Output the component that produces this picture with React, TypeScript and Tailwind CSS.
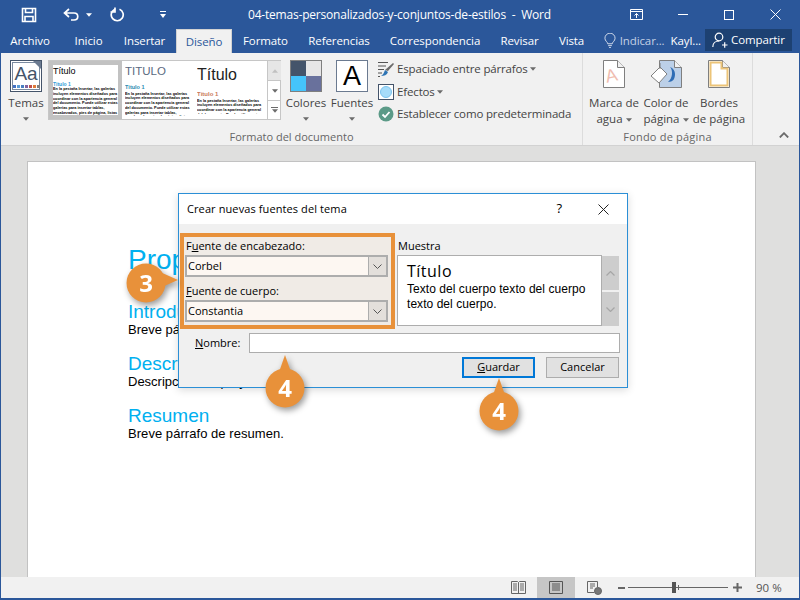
import type { ReactNode } from 'react';

const UI_FONT = "font-['Open_Sans','Noto_Sans',sans-serif]";

const TABS: { label: string; width: string }[] = [
  { label: 'Archivo', width: 'w-[63px] pr-[5px]' },
  { label: 'Inicio', width: 'w-[49px]' },
  { label: 'Insertar', width: 'w-[63px]' },
  { label: 'Diseño', width: 'w-[56px]' },
  { label: 'Formato', width: 'w-[67px]' },
  { label: 'Referencias', width: 'w-[80px]' },
  { label: 'Correspondencia', width: 'w-[112px]' },
  { label: 'Revisar', width: 'w-[57px]' },
  { label: 'Vista', width: 'w-[47px]' },
];

const BODY_TEXT =
  'En la pestaña Insertar, las galerías incluyen elementos diseñados para coordinar con la apariencia general del documento. Puede utilizar estas galerías para insertar tablas, encabezados, pies de página, listas';

function Caret({ className = '' }: { className?: string }) {
  return (
    <svg width="6" height="4" viewBox="0 0 7 4" className={className}>
      <path d="M0 0h7L3.500 4z" fill="#6b6b6b" />
    </svg>
  );
}

function TitleBar() {
  return (
    <div className="flex h-[29px] shrink-0 items-center bg-[#2b579a] text-white">
      <svg width="16" height="16" viewBox="0 0 16 16" className="ml-[20px]" fill="none" stroke="white" strokeWidth="1.600">
        <path d="M1.500 1.500h13v13h-13z" />
        <path d="M4.500 1.500v4h7v-4M4 14.500v-5h8v5" />
      </svg>
      <svg width="17" height="14" viewBox="0 0 17 14" className="ml-[26px]" fill="none" stroke="white" strokeWidth="1.700">
        <path d="M6 1L1.500 5 6 9M2 5h9c5 0 5 7 0 7H8" />
      </svg>
      <Caret className="ml-[6px] [&>path]:fill-white" />
      <svg width="15" height="15" viewBox="0 0 15 15" className="ml-[18px]" fill="none" stroke="white" strokeWidth="1.700">
        <path d="M9.500 2.200a6 6 0 1 1-5 .2M5 .5v4.500H.5" />
      </svg>
      <svg width="6" height="7" viewBox="0 0 6 7" className="ml-[35px]">
        <path d="M0 0h6v1H0zM0 3h6L3 7z" fill="white" />
      </svg>
      <div className="ml-[82px] w-[304px] whitespace-nowrap text-[12px] tracking-[-0.200px]">
        04-temas-personalizados-y-conjuntos-de-estilos&nbsp; -&nbsp; Word
      </div>
      <svg width="13" height="11" viewBox="0 0 13 11" className="ml-[78px]" fill="none" stroke="white">
        <path d="M.500.500h12v10H.500zM.500 2.500h12M6.500 9V4.500M4.500 6.500l2-2 2 2" />
      </svg>
      <div className="ml-[35px] h-px w-[10px] bg-white" />
      <div className="ml-[36px] size-[10px] border border-white" />
      <svg width="11" height="11" viewBox="0 0 11 11" className="ml-[36px]" stroke="white">
        <path d="M.500.500l10 10M10.500.500l-10 10" />
      </svg>
    </div>
  );
}

function TabRow() {
  return (
    <div className="flex h-[24px] shrink-0 items-stretch bg-[#2b579a] text-[11.500px] tracking-[-0.100px] text-white">
      <div className="flex">
        {TABS.map((t) =>
          t.label === 'Diseño' ? (
            <div
              key={t.label}
              className={`flex h-[25px] items-center justify-center border-x border-t border-[#d2d2d2] bg-[#f1f1f1] text-[#2b579a] ${t.width}`}
            >
              {t.label}
            </div>
          ) : (
            <div key={t.label} className={`flex items-center justify-center ${t.width}`}>
              {t.label}
            </div>
          ),
        )}
      </div>
      <div className="ml-auto mr-[7px] flex items-center">
        <svg width="12" height="16" viewBox="0 0 13 16" fill="none" stroke="#dbe3f0" strokeWidth="1">
          <path d="M4 11c0-2-3-3-3-6a5.500 5.500 0 0 1 11 0c0 3-3 4-3 6zM4.500 13h4M5.500 15h2" />
        </svg>
        <span className="ml-[4px] text-[#c3d0e4]">Indicar...</span>
        <span className="ml-[6px]">Kayl...</span>
        <div className="ml-[4px] flex h-[22px] w-[87px] items-center self-start bg-[#1d4172] pl-[7px]">
          <svg width="16" height="16" viewBox="0 0 16 16" fill="none" stroke="white" strokeWidth="1.200">
            <circle cx="7" cy="5" r="3.800" />
            <path d="M.800 15c0-4 3-6 6.200-6M10 13h5.500M12.700 10.200v5.600" />
          </svg>
          <span className="ml-[3px]">Compartir</span>
        </div>
      </div>
    </div>
  );
}

function ThemesIcon() {
  return (
    <div className="relative size-[32px] border border-[#44546a] bg-white p-px">
      <div className="flex size-full flex-col items-center border border-[#7b8ba0]">
        <span className="mt-[1px] font-['Liberation_Sans',sans-serif] text-[19px] leading-[20px] text-[#44546a]">
          Aa
        </span>
        <div className="mt-[1px] flex gap-px">
          {['#4472c4', '#5b9bd5', '#4a7fc1', '#8064a2', '#c0504d', '#e07b39', '#7f7f7f'].map((c) => (
            <span key={c} className="size-[3px]" style={{ background: c }} />
          ))}
        </div>
      </div>
      <svg width="8" height="8" viewBox="0 0 8 8" className="absolute right-0 top-0">
        <path d="M0 0h8v8z" fill="#6b7a90" />
      </svg>
    </div>
  );
}

function GalleryItem({
  box,
  title,
  titleClass,
  headingClass,
  bodyClass,
}: {
  box: string;
  title: string;
  titleClass: string;
  headingClass: string;
  bodyClass: string;
}) {
  return (
    <div className={`h-full shrink-0 overflow-hidden ${box}`}>
      <div className="h-full overflow-hidden bg-white font-['Liberation_Sans',sans-serif]">
        <div className={`whitespace-nowrap ${titleClass}`}>{title}</div>
        <div className={`font-bold ${headingClass}`}>Título 1</div>
        <div className={`overflow-hidden text-[3.800px] font-bold leading-[4.800px] text-black ${bodyClass}`}>{BODY_TEXT}</div>
      </div>
    </div>
  );
}

function Gallery() {
  return (
    <div className="ml-[3px] mt-[7px] flex h-[60px] w-[233px] border border-[#c6c6c6] bg-white">
      <GalleryItem
        box="w-[73px] border-[4px] border-[#c2c2c2]"
        title="Título"
        titleClass="mt-px text-[9px] leading-[10px] text-black"
        headingClass="mt-[5px] text-[5px] leading-[6px] text-[#2e9bd6]"
        bodyClass="h-[29px]"
      />
      <GalleryItem
        box="w-[74px] pl-[3px] pr-[3px] pt-[4px]"
        title="TITULO"
        titleClass="text-[11.500px] leading-[12px] text-[#5a6a80]"
        headingClass="mt-[7px] text-[5.500px] leading-[6px] text-[#2a8cb0]"
        bodyClass="mt-[1.500px] h-[24px]"
      />
      <GalleryItem
        box="w-[71px] pl-[1px] pr-[2px] pt-[4px]"
        title="Título"
        titleClass="text-[16px] leading-[20px] text-[#222]"
        headingClass="mt-[5px] text-[6px] leading-[8px] text-[#c9795a]"
        bodyClass="mt-[0.500px] h-[15px]"
      />
      <div className="flex w-[14px] shrink-0 flex-col border-l border-[#c6c6c6]">
        <div className="flex h-[20px] items-center justify-center border-b border-[#c6c6c6] bg-[#e6e6e6]">
          <Caret className="rotate-180 opacity-30" />
        </div>
        <div className="flex h-[20px] items-center justify-center border-b border-[#c6c6c6]">
          <Caret />
        </div>
        <div className="flex flex-1 flex-col items-center justify-center gap-px">
          <div className="h-px w-[7px] bg-[#6b6b6b]" />
          <Caret />
        </div>
      </div>
    </div>
  );
}

function BigButton({ width, icon, label, caret }: { width: string; icon: ReactNode; label: ReactNode; caret?: boolean }) {
  return (
    <div className={`flex shrink-0 flex-col items-center text-[11.500px] leading-[16px] text-[#444] ${width}`}>
      <div className="h-[32px]">{icon}</div>
      <div className="mt-[3px] whitespace-nowrap text-center">{label}</div>
      {caret && <Caret className="mt-[6px]" />}
    </div>
  );
}

function PageIcon({ children }: { children?: ReactNode }) {
  return (
    <svg width="22" height="28" viewBox="0 0 22 28">
      <path d="M.500.500h14l7 7v20H.500z" fill="white" stroke="#7f7f7f" />
      <path d="M14.500.500v7h7" fill="#f1f1f1" stroke="#7f7f7f" />
      {children}
    </svg>
  );
}

function Ribbon() {
  return (
    <div className="flex h-[93px] shrink-0 border-b border-[#d2d2d2] bg-[#f1f1f1]">
      <div className="flex w-[582px] shrink-0 flex-col border-r border-[#dcdcdc]">
        <div className="flex h-[78px]">
          <BigButton width="ml-[6px] w-[38px] pt-[7px]" icon={<ThemesIcon />} label="Temas" caret />
          <Gallery />
          <BigButton
            width="ml-[2px] w-[46px] pt-[7px]"
            caret
            label="Colores"
            icon={
              <div className="grid size-[32px] grid-cols-2 grid-rows-2 border border-[#7f7f7f]">
                <span className="bg-[#44546a]" />
                <span className="bg-[#e7e6e6]" />
                <span className="bg-[#45c4fb]" />
                <span className="bg-[#69719c]" />
              </div>
            }
          />
          <BigButton
            width="w-[46px] pt-[7px]"
            caret
            label="Fuentes"
            icon={
              <div className="flex size-[32px] items-center justify-center border border-[#6b7a90] bg-white font-['Liberation_Sans',sans-serif] text-[27px] text-black">
                A
              </div>
            }
          />
          <div className="ml-[3px] flex flex-col gap-[2.500px] pt-[6px] text-[11.500px] tracking-[-0.150px] text-[#444]">
            <div className="flex h-[20px] items-center gap-[3px] whitespace-nowrap">
              <svg width="16" height="16" viewBox="0 0 16 16" fill="none">
                <path d="M0 1.500h10M0 5h8M0 8.500h6M0 12h4M0 15.500h2" stroke="#555" />
                <path d="M15 2l1 1-6 7-3-1z" fill="#6b6b6b" />
                <path d="M7 9l3 2c-1 3-4 4-7 4 2-1 3-3 4-6z" fill="#2f75b5" />
              </svg>
              Espaciado entre párrafos
              <Caret className="-ml-px" />
            </div>
            <div className="flex h-[20px] items-center gap-[3px] whitespace-nowrap">
              <div className="flex size-[16px] items-center justify-center border border-[#44546a] bg-white">
                <div className="size-[12px] rounded-full border border-[#7cc3ee] bg-[#a6dcfa]" />
              </div>
              Efectos
              <Caret className="-ml-px" />
            </div>
            <div className="flex h-[20px] items-center gap-[3px] whitespace-nowrap">
              <svg width="16" height="16" viewBox="0 0 16 16">
                <circle cx="8" cy="8" r="7.500" fill="#5b9a87" />
                <path d="M4.500 8.500l2.500 2.500 4.500-5" fill="none" stroke="white" strokeWidth="1.800" />
              </svg>
              Establecer como predeterminada
            </div>
          </div>
        </div>
        <div className="text-center text-[11px] text-[#666]">Formato del documento</div>
      </div>
      <div className="flex w-[170px] shrink-0 flex-col border-r border-[#dcdcdc]">
        <div className="flex h-[78px] pl-[5px] pt-[7px]">
          <BigButton
            width="w-[52px]"
            label={
              <>
                Marca de
                <br />
                agua <Caret className="inline align-middle" />
              </>
            }
            icon={
              <PageIcon>
                <text x="2" y="21" fontSize="18" fill="#f0bdb0" fontFamily="Liberation Sans" transform="rotate(-12 11 14)">
                  A
                </text>
              </PageIcon>
            }
          />
          <BigButton
            width="w-[52px]"
            label={
              <>
                Color de
                <br />
                página <Caret className="inline align-middle" />
              </>
            }
            icon={
              <svg width="32" height="28" viewBox="0 0 32 28">
                <path d="M9.500.500h15l7 7v20h-22z" fill="#bcd0e8" stroke="#7f7f7f" />
                <path d="M24.500.500v7h7" fill="#f1f1f1" stroke="#7f7f7f" />
                <path d="M20 7c3 3 3 11-2 15 5 0 7-3 7-8 0-3-2-6-5-7z" fill="#2f6db5" />
                <path d="M1 16l9-9 7 7-8 9z" fill="white" stroke="#7f7f7f" />
                <path d="M10 9V3" stroke="#7f7f7f" fill="none" />
              </svg>
            }
          />
          <BigButton
            width="w-[54px]"
            label={
              <>
                Bordes
                <br />
                de página
              </>
            }
            icon={
              <PageIcon>
                <path d="M2.500 2.500h11v6h6v17h-17z" fill="none" stroke="#ecc478" strokeWidth="2" />
              </PageIcon>
            }
          />
        </div>
        <div className="text-center text-[11px] tracking-[0.200px] text-[#666]">Fondo de página</div>
      </div>
      <div className="flex flex-1 items-end justify-end pb-[7px] pr-[10px]">
        <svg width="10" height="6" viewBox="0 0 10 6" fill="none" stroke="#6b6b6b" strokeWidth="1.800">
          <path d="M.800 5.500L5 1.200l4.200 4.300" />
        </svg>
      </div>
    </div>
  );
}

function DocumentArea() {
  const heading = 'text-[19px] leading-[21px] text-[#00b0f0]';
  const para = 'text-[13px] leading-[15px] text-black';
  return (
    <div className="min-h-0 flex-1 bg-[#dfdfde] pl-[26px] pt-[15px]">
      <div className="h-full w-[729px] border-l border-r border-t border-[#c2c2c2] bg-white pl-[100px] pt-[81px] font-['Liberation_Sans',sans-serif]">
        <div className="text-[28px] leading-[34px] text-[#00b0f0]">Propuesta</div>
        <div className={`mt-[24px] ${heading}`}>Introducción</div>
        <div className={para}>Breve párrafo de introducción.</div>
        <div className={`mt-[16px] ${heading}`}>Descripción</div>
        <div className={para}>Descripción del proyecto.</div>
        <div className={`mt-[16px] ${heading}`}>Resumen</div>
        <div className={`tracking-[0.050px] ${para}`}>Breve párrafo de resumen.</div>
      </div>
    </div>
  );
}

function StatusBar() {
  return (
    <div className="flex h-[21px] shrink-0 items-center bg-[#f1f1f1] text-[11.500px] text-[#555]">
      <svg width="15" height="13" viewBox="0 0 15 13" className="ml-[510px]" fill="none" stroke="#666">
        <path d="M.500.500h6l1 1 1-1h6v12h-14zM7.500 1.500v11M2 3h4M2 5h4M2 7h4M2 9h4M9 3h4M9 5h4M9 7h4M9 9h4" />
      </svg>
      <div className="ml-[11px] flex h-[21px] w-[38px] items-center justify-center bg-[#c6c6c6]">
        <svg width="14" height="13" viewBox="0 0 14 13" fill="none" stroke="#555">
          <path d="M.500.500h13v12H.500zM3 3h8M3 5h8M3 7h8M3 9h8" />
        </svg>
      </div>
      <svg width="15" height="14" viewBox="0 0 15 14" className="ml-[12px]" fill="none" stroke="#666">
        <path d="M7.500 11.500h-7V.500h10V6M3 3h5M3 5h5M3 7h3" />
        <circle cx="11" cy="10" r="3.500" fill="#777" />
      </svg>
      <div className="ml-[16px] h-[2px] w-[7px] bg-[#666]" />
      <div className="relative ml-[3px] h-px w-[100px] bg-[#666]">
        <div className="absolute left-[44px] top-[-5px] h-[11px] w-[4px] bg-[#555]" />
        <div className="absolute left-[50px] top-[-2px] h-[5px] w-px bg-[#666]" />
      </div>
      <svg width="9" height="9" viewBox="0 0 9 9" className="ml-[5px]" stroke="#666" strokeWidth="2">
        <path d="M0 4.500h9M4.500 0v9" />
      </svg>
      <span className="ml-[14px]">90 %</span>
    </div>
  );
}

function Combo({ value }: { value: string }) {
  return (
    <div className="flex h-[22px] w-[203px] border-2 border-[#adadad] bg-[#fdf7f2]">
      <div className="flex-1 pl-[1px] leading-[18px] text-black">{value}</div>
      <div className="flex w-[18px] items-center justify-center border-l border-[#adadad] bg-[#e3dfdb]">
        <svg width="9" height="5" viewBox="0 0 9 5" fill="none" stroke="#555">
          <path d="M.500.500l4 4 4-4" />
        </svg>
      </div>
    </div>
  );
}

function ScrollButton({ up }: { up?: boolean }) {
  return (
    <div className="flex h-[34px] w-[17px] items-center justify-center bg-[#cdcdcd]">
      <svg width="9" height="5" viewBox="0 0 9 5" fill="none" stroke="#a6a6a6" strokeWidth="1.200" className={up ? 'rotate-180' : ''}>
        <path d="M.500.500l4 4 4-4" />
      </svg>
    </div>
  );
}

function Dialog() {
  return (
    <div className="absolute left-[177px] top-[193px] z-10 flex h-[195px] w-[450px] flex-col border border-[#2b8fd6] bg-[#f0f0f0] text-[11px] text-black shadow-[0_2px_8px_rgba(0,0,0,0.15)]">
      <div className="flex h-[30px] shrink-0 items-center bg-white pl-[8px]">
        <span className="tracking-[0.100px]">Crear nuevas fuentes del tema</span>
        <span className="ml-auto text-[13px]">?</span>
        <svg width="11" height="11" viewBox="0 0 11 11" className="ml-[36px] mr-[18px]" stroke="#222">
          <path d="M.500.500l10 10M10.500.500l-10 10" />
        </svg>
      </div>
      <div className="flex pl-[1px] pt-[9px]">
        <div className="flex h-[96px] w-[215px] shrink-0 flex-col border-[4px] border-[#e8913a] bg-[#f0ebe6] pl-[1px]">
          <div className="h-[18px] pl-[1px] pt-[2px] leading-[14px]">
            F<span className="underline">u</span>ente de encabezado:
          </div>
          <Combo value="Corbel" />
          <div className="h-[23px] pl-[1px] pt-[7px] leading-[14px]">
            <span className="underline">F</span>uente de cuerpo:
          </div>
          <Combo value="Constantia" />
        </div>
        <div className="ml-[2px] w-[205px] shrink-0">
          <div className="h-[22px] pl-px pt-[6px] leading-[14px]">Muestra</div>
          <div className="h-[71px] border border-[#adadad] bg-white pl-[9px] pt-[4px] font-['Liberation_Sans',sans-serif]">
            <div className="font-['Open_Sans',sans-serif] text-[16px] leading-[22px] tracking-[0.500px]">Título</div>
            <div className="text-[12px] leading-[15px] tracking-[0.050px]">
              Texto del cuerpo texto del cuerpo
              <br />
              texto del cuerpo.
            </div>
          </div>
        </div>
        <div className="flex flex-col gap-[2px] pt-[23px]">
          <ScrollButton up />
          <ScrollButton />
        </div>
      </div>
      <div className="mt-[4px] flex items-center pl-[16px]">
        <span className="w-[54px] leading-[20px]">
          <span className="underline">N</span>ombre:
        </span>
        <div className="h-[20px] w-[371px] border border-[#adadad] bg-white" />
      </div>
      <div className="mt-[4px] flex items-center pl-[283px]">
        <div className="flex h-[21px] w-[73px] items-center justify-center border-2 border-[#0078d7] bg-[#e1e1e1]">
          <span>
            <span className="underline">G</span>uardar
          </span>
        </div>
        <div className="ml-[11px] flex h-[21px] w-[73px] items-center justify-center border border-[#adadad] bg-[#e1e1e1]">
          Cancelar
        </div>
      </div>
    </div>
  );
}

function Callout({ n, className, pointer }: { n: string; className: string; pointer: 'right' | 'up' }) {
  return (
    <div className={`absolute z-20 size-[40px] drop-shadow-[2px_3px_3px_rgba(0,0,0,0.4)] ${className}`}>
      <svg width="40" height="40" viewBox="0 0 40 40" className="absolute left-0 top-0 overflow-visible">
        {pointer === 'right' ? <path d="M34 9L52 17 36 24z" fill="#e8913a" /> : <path d="M14 4L20 -13 26 4z" fill="#e8913a" />}
        <circle cx="20" cy="20" r="19.500" fill="#e8913a" />
      </svg>
      <span className="absolute inset-0 flex items-center justify-center font-['Open_Sans',sans-serif] text-[24px] font-bold leading-none text-white">
        {n}
      </span>
    </div>
  );
}

export default function App() {
  return (
    <div className={`relative flex h-[600px] w-[800px] flex-col overflow-hidden border-x border-b-2 border-x-[#2b579a] border-b-[#2b579a] ${UI_FONT}`}>
      <TitleBar />
      <TabRow />
      <Ribbon />
      <DocumentArea />
      <StatusBar />
      <Dialog />
      <Callout n="3" pointer="right" className="left-[125px] top-[263px]" />
      <Callout n="4" pointer="up" className="left-[264px] top-[368px]" />
      <Callout n="4" pointer="up" className="left-[478px] top-[391px]" />
    </div>
  );
}
